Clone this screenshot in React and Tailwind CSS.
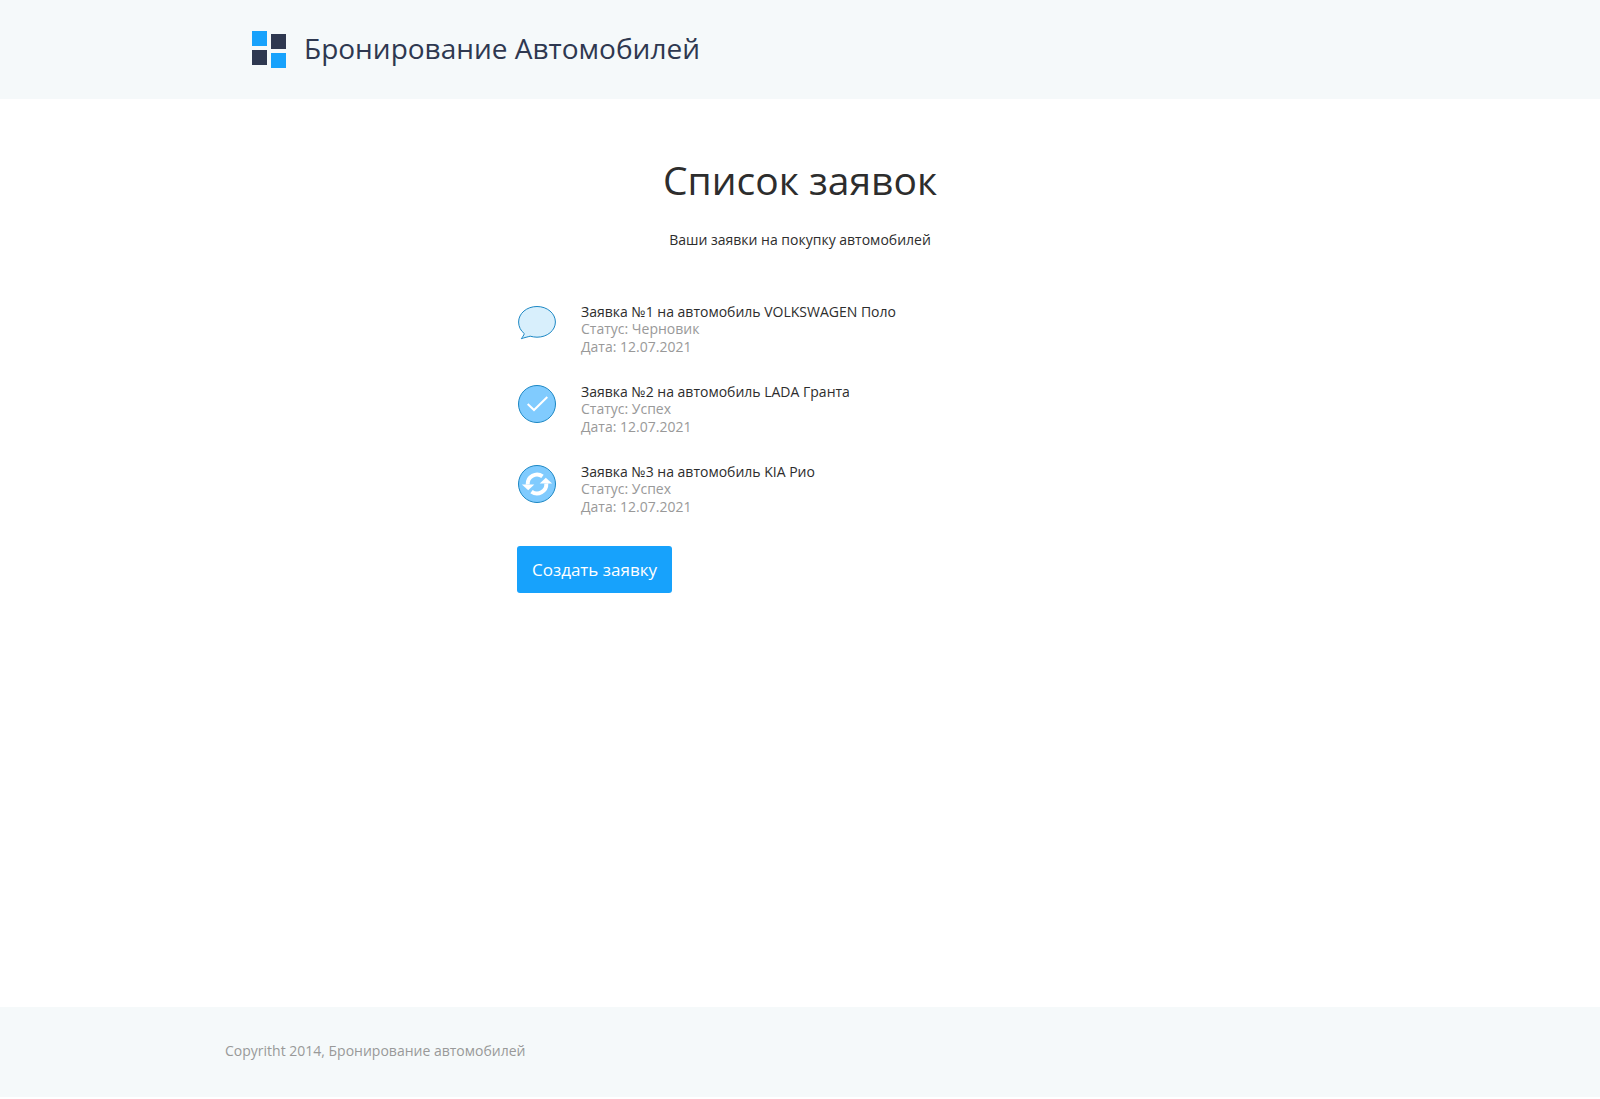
function Logo() {
  return (
    <svg viewBox="0 0 34 37" className="h-[37px] w-[34px] shrink-0" aria-hidden="true">
      <rect x="0" y="0" width="15" height="15" fill="#17a2fc" />
      <rect x="19" y="3" width="15" height="15" fill="#2e3850" />
      <rect x="0" y="19" width="15" height="15" fill="#2e3850" />
      <rect x="19" y="22" width="15" height="15" fill="#17a2fc" />
    </svg>
  );
}

function DraftIcon() {
  return (
    <svg viewBox="0 -1 40 40" className="size-10 shrink-0" fill="#d8effc" stroke="#1b87c4" aria-hidden="true">
      <path
        d="M20 1.5C30.2 1.5 38.4 8.4 38.4 17S30.2 32.2 20 32.2C17.6 32.2 15.3 31.7 13.2 31.2C10.6 31.9 7.8 32.5 4.3 33.7C5.7 31.9 6.8 30.2 7.3 28.6C3.7 25.8 1.6 21.6 1.6 17C1.6 8.4 9.8 1.5 20 1.5Z"
        strokeLinejoin="round"
      />
    </svg>
  );
}

function SuccessIcon() {
  return (
    <svg viewBox="0 0 40 40" className="size-10 shrink-0" fill="none" aria-hidden="true">
      <circle cx="20" cy="20" r="18.5" fill="#80cbfe" stroke="#1b87c4" />
      <path d="M10.7 20L17 26L30.3 13" stroke="#fff" strokeWidth="2" />
    </svg>
  );
}

function SyncIcon() {
  return (
    <svg viewBox="0 0 40 40" className="size-10 shrink-0" fill="none" aria-hidden="true">
      <circle cx="20" cy="20" r="18.5" fill="#80cbfe" stroke="#1b87c4" />
      <path d="M10.7 20.5A9.300 9.300 0 0 1 25.500 12.400" stroke="#fff" strokeWidth="4" />
      <path d="M29.300 19.500A9.300 9.300 0 0 1 14.500 27.600" stroke="#fff" strokeWidth="4" />
      <path d="M4.900 20.500H17.300L11.200 26.200Z" fill="#fff" />
      <path d="M35.100 19.500H22.700L28.800 13.800Z" fill="#fff" />
    </svg>
  );
}

const requests = [
  { title: "Заявка №1 на автомобиль VOLKSWAGEN Поло", status: "Черновик", date: "12.07.2021", Icon: DraftIcon },
  { title: "Заявка №2 на автомобиль LADA Гранта", status: "Успех", date: "12.07.2021", Icon: SuccessIcon },
  { title: "Заявка №3 на автомобиль KIA Рио", status: "Успех", date: "12.07.2021", Icon: SyncIcon },
];

export default function App() {
  return (
    <div className="flex min-h-screen flex-col bg-white pb-0.5 font-['Open_Sans','Noto_Sans',sans-serif] text-sm text-[#2d2d2d]">
      <header className="bg-[#f5f9fa] py-[31px]">
        <div className="mx-auto flex w-full max-w-[1096px] items-start gap-[18px]">
          <Logo />
          <span className="text-[28px] leading-[35px] text-[#2e3850]">Бронирование Автомобилей</span>
        </div>
      </header>

      <main className="mx-auto w-full max-w-[566px] grow pt-14">
        <h1 className="text-center text-[39px] leading-[50px]">Список заявок</h1>
        <p className="mt-[25px] text-center leading-5">Ваши заявки на покупку автомобилей</p>

        <ul className="mt-[54px]">
          {requests.map(({ title, status, date, Icon }) => (
            <li key={title} className="flex h-20 gap-6">
              <Icon />
              <div>
                <h2 className="leading-4">{title}</h2>
                <p className="leading-[18px] text-[#999]">Статус: {status}</p>
                <p className="leading-[18px] text-[#999]">Дата: {date}</p>
              </div>
            </li>
          ))}
        </ul>

        <button type="button" className="mt-0.5 rounded-[3px] bg-[#17a2fc] px-[15px] py-3 text-[17px] leading-[23px] text-white">
          Создать заявку
        </button>
      </main>

      <footer className="bg-[#f5f9fa] pt-[34px] pb-9">
        <p className="mx-auto w-full max-w-[1150px] leading-5 text-[#999]">Copyritht 2014, Бронирование автомобилей</p>
      </footer>
    </div>
  );
}
